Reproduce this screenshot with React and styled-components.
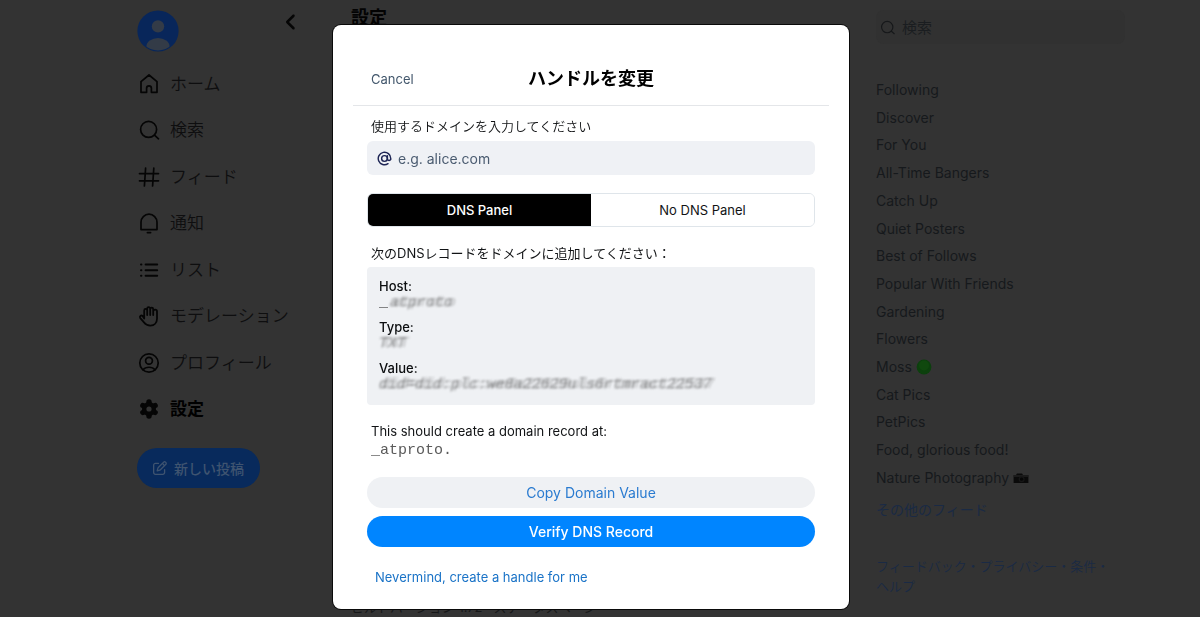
import React, { useState } from "react";
import styled, { createGlobalStyle, css } from "styled-components";
import { FaRegPenToSquare, FaAngleLeft } from "react-icons/fa6";

const GlobalStyle = createGlobalStyle`
  * {
    box-sizing: border-box;
  }
  body {
    margin: 0;
    background: #333333;
    color: #0c0c0d;
    font-family: Inter, "Noto Sans CJK JP", sans-serif;
  }
  button,
  input {
    font-family: inherit;
    padding: 0;
    border: 0;
    background: none;
  }
  a {
    text-decoration: none;
  }
`;

const Page = styled.div`
  display: grid;
  grid-template-columns: 1fr 516px 1fr;
  min-height: 100vh;
  padding-right: 18px;
`;

const Sidebar = styled.aside`
  display: flex;
  justify-content: flex-end;
  align-items: flex-start;
  padding: 10px 32px 0 0;
`;

const SidebarBody = styled.div`
  flex: 0 0 144px;
  min-width: 0;
`;

const BackButton = styled.button`
  display: flex;
  margin-top: 2px;
  color: #050505;
`;

const Avatar = styled.svg`
  display: block;
  width: 42px;
  height: 42px;
`;

const Nav = styled.nav`
  display: flex;
  flex-direction: column;
  justify-content: space-between;
  height: 351px;
  margin-top: 19px;
`;

const NavLink = styled.a`
  display: flex;
  align-items: center;
  gap: 9px;
  height: 26px;
  font-size: 17px;
  line-height: 24px;
  font-weight: ${(props) => (props.$active ? 700 : 350)};
  color: ${(props) => (props.$active ? "#000000" : "#0e0e0f")};
  white-space: nowrap;

  svg {
    flex: none;
    width: 24px;
    height: 24px;
    color: #050505;
  }
`;

const PostButton = styled.button`
  display: flex;
  align-items: center;
  justify-content: center;
  gap: 7px;
  width: 123px;
  height: 40px;
  margin-top: 26px;
  border-radius: 20px;
  background: #082a5c;
  color: #3f5470;
  font-size: 14px;
  font-weight: 500;
`;

const Main = styled.main`
  display: flex;
  flex-direction: column;
  justify-content: space-between;
  padding: 5px 18px 0;
`;

const PageTitle = styled.h1`
  margin: 0;
  font-size: 18px;
  line-height: 26px;
  color: #030303;
`;

const BuildInfo = styled.p`
  margin: 0;
  font-size: 13px;
  line-height: 20px;
  color: #161718;
`;

const Aside = styled.aside`
  max-width: 276px;
  padding: 10px 0 0 27px;
`;

const Search = styled.label`
  display: flex;
  align-items: center;
  gap: 6px;
  height: 34px;
  padding: 0 3px;
  border-radius: 8px;
  background: #313131;
  color: #16181a;

  input {
    flex: 1;
    min-width: 0;
    color: inherit;
    font-size: 15px;
    outline: none;
  }
  input::placeholder {
    color: #1a1d20;
    opacity: 1;
  }
`;

const Feeds = styled.nav`
  display: flex;
  flex-direction: column;
  justify-content: space-between;
  height: 408px;
  margin-top: 36px;
`;

const FeedLink = styled.a`
  display: flex;
  align-items: center;
  gap: 4px;
  font-size: 14px;
  line-height: 20px;
  color: #16191c;
  white-space: nowrap;
`;

const MoreFeeds = styled.a`
  display: block;
  margin-top: 12px;
  font-size: 14px;
  line-height: 20px;
  color: #1a2a44;
`;

const Footer = styled.footer`
  display: flex;
  flex-wrap: wrap;
  margin-top: 36px;
  font-size: 13px;
  font-weight: 350;
  line-height: 20px;
  color: #1a2a44;

  a {
    color: inherit;
  }
`;

const Overlay = styled.div`
  position: fixed;
  inset: 0;
  display: flex;
  justify-content: center;
  align-items: flex-start;
  padding: 25px 18px 9px 0;
`;

const Dialog = styled.section`
  width: 516px;
  padding: 27px 20px 22px;
  border-radius: 8px;
  background: #ffffff;
  box-shadow: 0 0 0 1px #0a0a0a;
`;

const DialogHeader = styled.header`
  display: grid;
  grid-template-columns: 1fr auto 1fr;
  align-items: center;
  height: 54px;
  padding: 0 18px;
  border-bottom: 1px solid #e4e6e9;
`;

const CancelButton = styled.button`
  justify-self: start;
  font-size: 13px;
  color: #42576c;
`;

const DialogTitle = styled.h2`
  margin: 0;
  font-size: 18px;
  font-weight: 700;
  line-height: 26px;
  color: #000000;
`;

const DialogBody = styled.div`
  display: flex;
  flex-direction: column;
  padding: 10px 14px 0;
`;

const labelText = css`
  padding: 0 4px;
  font-size: 13px;
  line-height: 20px;
  color: #111315;
`;

const Label = styled.label`
  ${labelText}
  font-weight: 350;
`;

const Text = styled.p`
  ${labelText}
  margin: 0;
`;

const DomainField = styled.div`
  display: flex;
  align-items: center;
  gap: 6px;
  height: 34px;
  margin: 5px 0 18px;
  padding: 0 10px;
  border-radius: 6px;
  background: #eff1f5;
  color: #1d2454;

  input {
    flex: 1;
    min-width: 0;
    font-size: 14px;
    color: #0b0f14;
    outline: none;
  }
  input::placeholder {
    color: #4a5b70;
    opacity: 1;
  }
`;

const Tabs = styled.div`
  display: flex;
  height: 34px;
  margin-bottom: 16px;
  border: 1px solid #dfe5ea;
  border-radius: 6px;
  overflow: hidden;
`;

const Tab = styled.button`
  flex: 1;
  font-size: 13px;
  font-weight: ${(props) => (props.$selected ? 500 : 400)};
  color: ${(props) => (props.$selected ? "#ffffff" : "#111315")};
  background: ${(props) => (props.$selected ? "#000000" : "#ffffff")};
`;

const RecordCard = styled.dl`
  height: 138px;
  margin: 4px 0 16px;
  padding: 9px 12px;
  border-radius: 4px;
  background: #eff1f4;
`;

const RecordName = styled.dt`
  font-size: 13px;
  font-weight: 500;
  line-height: 20px;
  color: #0b0d0f;
`;

const RecordValue = styled.dd`
  display: flex;
  gap: 2px;
  height: 13px;
  margin: 0 0 8px;
  font-family: "Liberation Mono", monospace;
  font-size: 15px;
  line-height: 13px;
  color: #555555;
`;

const Smudge = styled.span`
  font-style: italic;
  color: rgba(60, 60, 60, 0.4);
  text-shadow: 3px 0 1px rgba(60, 60, 60, 0.3), -1px 1px 0 rgba(60, 60, 60, 0.2);
  filter: blur(1px);
  white-space: nowrap;
`;

const Mono = styled.p`
  margin: 0 0 17px;
  padding: 0 4px;
  font-family: "Liberation Mono", monospace;
  font-size: 15px;
  line-height: 19px;
  color: #5a5a5a;
`;

const PillButton = styled.button`
  height: 31px;
  margin-bottom: 8px;
  border-radius: 16px;
  font-size: 14px;
  font-weight: ${(props) => (props.$primary ? 500 : 400)};
  color: ${(props) => (props.$primary ? "#ffffff" : "#2a7bd0")};
  background: ${(props) => (props.$primary ? "#0085ff" : "#eff1f4")};
`;

const TextButton = styled.button`
  align-self: flex-start;
  margin-top: 12px;
  padding: 0 8px;
  font-size: 13px;
  line-height: 20px;
  color: #1a73c7;
`;

const Icon = ({ children, size = 24, width = 1.7 }) => (
  <svg
    width={size}
    height={size}
    viewBox="0 0 24 24"
    fill="none"
    stroke="currentColor"
    strokeWidth={width}
    strokeLinecap="round"
    strokeLinejoin="round"
    aria-hidden="true"
  >
    {children}
  </svg>
);

const HomeIcon = () => (
  <Icon>
    <path d="M4 20.3V9.6L12 3l8 6.6v10.7h-5.6v-4a2.4 2.4 0 0 0-4.8 0v4z" />
  </Icon>
);

const SearchIcon = ({ size }) => (
  <Icon size={size}>
    <circle cx="11.6" cy="11.4" r="8" />
    <path d="M17.5 17.2l4 3.6" />
  </Icon>
);

const HashIcon = () => (
  <Icon>
    <path d="M2.5 8.6h19M2.5 15.8h19M8.6 3.2L7.4 21M16.8 3.2L15.6 21" />
  </Icon>
);

const BellIcon = () => (
  <Icon>
    <path d="M4 18.6v-7.4a8 8 0 0 1 16 0v7.4zM10.4 21.6h3.2" />
  </Icon>
);

const ListIcon = () => (
  <Icon width={2}>
    <path d="M8.6 6.6h11.6M8.6 12.2h11.6M8.6 17.8h11.6M4 6.6h.4M4 12.2h.4M4 17.8h.4" />
  </Icon>
);

const HandIcon = () => (
  <Icon width={1.8}>
    <path d="M7.2 14.5V6.4a1.5 1.5 0 0 1 3 0V11M10.2 11V4.6a1.5 1.5 0 0 1 3 0V11M13.2 11V5.2a1.5 1.5 0 0 1 3 0V11M16.2 11V7.6a1.9 1.9 0 0 1 3.8 0v7.2c0 4-2.8 6.8-6.6 6.8-3.4 0-4.9-1.3-6.6-3.4l-3.5-4.1c-1.2-1.6.8-3.4 2.3-2.1l1.6 2.5" />
  </Icon>
);

const ProfileIcon = () => (
  <Icon>
    <circle cx="12" cy="12" r="9.2" />
    <circle cx="12" cy="9.8" r="3.4" />
    <path d="M6 18.8c2.8-3.4 9.2-3.4 12 0" />
  </Icon>
);

const GearIcon = () => (
  <svg viewBox="0 0 24 24" fill="currentColor" aria-hidden="true">
    <g stroke="currentColor" strokeWidth="5.4" strokeLinecap="round">
      <path d="M12 5v14M5.9 8.5l12.2 7M5.9 15.5l12.2-7" />
    </g>
    <circle cx="12" cy="12" r="7" />
    <circle cx="12" cy="12" r="2.6" fill="#333333" />
  </svg>
);

const AtIcon = () => (
  <Icon size={15} width={2.3}>
    <circle cx="12" cy="12" r="4.6" />
    <path d="M16.6 7.6v5.8a3 3 0 0 0 5.4 0V12A10 10 0 1 0 17.6 20.3" />
  </Icon>
);

const MossDot = () => (
  <svg width="16" height="16" viewBox="0 0 16 16" aria-hidden="true">
    <circle cx="8" cy="8" r="7.4" fill="#0c400d" />
    <circle cx="8" cy="6.4" r="5" fill="#10480e" />
  </svg>
);

const CameraIcon = () => (
  <svg width="16" height="14" viewBox="0 0 16 14" aria-hidden="true">
    <path d="M1 4h2l1-1.6h5L10 4h5.4v8H.6V4z" fill="#0a0a0a" />
    <path d="M.6 4.2h14.8v1.6H.6z" fill="#202020" />
    <circle cx="8.6" cy="8.2" r="3" fill="#161616" />
    <circle cx="8.6" cy="8.2" r="1.6" fill="#060606" />
  </svg>
);

const navItems = [
  { label: "ホーム", icon: <HomeIcon /> },
  { label: "検索", icon: <SearchIcon /> },
  { label: "フィード", icon: <HashIcon /> },
  { label: "通知", icon: <BellIcon /> },
  { label: "リスト", icon: <ListIcon /> },
  { label: "モデレーション", icon: <HandIcon /> },
  { label: "プロフィール", icon: <ProfileIcon /> },
  { label: "設定", icon: <GearIcon />, active: true },
];

const feeds = [
  { name: "Following" },
  { name: "Discover" },
  { name: "For You" },
  { name: "All-Time Bangers" },
  { name: "Catch Up" },
  { name: "Quiet Posters" },
  { name: "Best of Follows" },
  { name: "Popular With Friends" },
  { name: "Gardening" },
  { name: "Flowers" },
  { name: "Moss", icon: <MossDot /> },
  { name: "Cat Pics" },
  { name: "PetPics" },
  { name: "Food, glorious food!" },
  { name: "Nature Photography", icon: <CameraIcon /> },
];

const footerLinks = ["フィードバック", "プライバシー", "条件", "ヘルプ"];

const ChangeHandle = () => {
  const [panel, setPanel] = useState("dns");
  const [domain, setDomain] = useState("");

  return (
    <Overlay>
      <Dialog role="dialog" aria-labelledby="dialog-title">
        <DialogHeader>
          <CancelButton type="button">Cancel</CancelButton>
          <DialogTitle id="dialog-title">ハンドルを変更</DialogTitle>
        </DialogHeader>
        <DialogBody>
          <Label htmlFor="domain">使用するドメインを入力してください</Label>
          <DomainField>
            <AtIcon />
            <input
              id="domain"
              type="text"
              placeholder="e.g. alice.com"
              value={domain}
              onChange={(e) => setDomain(e.target.value)}
            />
          </DomainField>
          <Tabs>
            <Tab
              type="button"
              $selected={panel === "dns"}
              onClick={() => setPanel("dns")}
            >
              DNS Panel
            </Tab>
            <Tab
              type="button"
              $selected={panel === "file"}
              onClick={() => setPanel("file")}
            >
              No DNS Panel
            </Tab>
          </Tabs>
          <Text>次のDNSレコードをドメインに追加してください：</Text>
          <RecordCard>
            <RecordName>Host:</RecordName>
            <RecordValue>
              _<Smudge>atproto</Smudge>
            </RecordValue>
            <RecordName>Type:</RecordName>
            <RecordValue>
              <Smudge>TXT</Smudge>
            </RecordValue>
            <RecordName>Value:</RecordName>
            <RecordValue>
              <Smudge>did=did:plc:we8a22629uls6rtmract22537</Smudge>
            </RecordValue>
          </RecordCard>
          <Text>This should create a domain record at:</Text>
          <Mono>_atproto.{domain}</Mono>
          <PillButton type="button">Copy Domain Value</PillButton>
          <PillButton type="button" $primary>
            Verify DNS Record
          </PillButton>
          <TextButton type="button">Nevermind, create a handle for me</TextButton>
        </DialogBody>
      </Dialog>
    </Overlay>
  );
};

const App = () => (
  <>
    <GlobalStyle />
    <Page>
      <Sidebar>
        <SidebarBody>
          <Avatar viewBox="0 0 42 42" aria-hidden="true">
            <clipPath id="avatar-clip">
              <circle cx="21" cy="21" r="19.6" />
            </clipPath>
            <circle cx="21" cy="21" r="20.6" fill="#08265a" />
            <g fill="#333b47" clipPath="url(#avatar-clip)">
              <circle cx="21" cy="16.4" r="6.2" />
              <ellipse cx="21" cy="36.5" rx="11.6" ry="8.6" />
            </g>
          </Avatar>
          <Nav>
            {navItems.map((item) => (
              <NavLink key={item.label} href="#" $active={item.active}>
                {item.icon}
                {item.label}
              </NavLink>
            ))}
          </Nav>
          <PostButton type="button">
            <FaRegPenToSquare size={14} />
            新しい投稿
          </PostButton>
        </SidebarBody>
        <BackButton type="button" aria-label="戻る">
          <FaAngleLeft size={20} />
        </BackButton>
      </Sidebar>
      <Main>
        <PageTitle>設定</PageTitle>
        <BuildInfo>ビルドバージョン 1.72 · ステータスページ</BuildInfo>
      </Main>
      <Aside>
        <Search>
          <SearchIcon size={17} />
          <input type="search" placeholder="検索" aria-label="検索" />
        </Search>
        <Feeds>
          {feeds.map((feed) => (
            <FeedLink key={feed.name} href="#">
              {feed.name}
              {feed.icon}
            </FeedLink>
          ))}
        </Feeds>
        <MoreFeeds href="#">その他のフィード</MoreFeeds>
        <Footer>
          {footerLinks.map((label, i) => (
            <span key={label}>
              <a href="#">{label}</a>
              {i < footerLinks.length - 1 && "・"}
            </span>
          ))}
        </Footer>
      </Aside>
    </Page>
    <ChangeHandle />
  </>
);

export default App;
